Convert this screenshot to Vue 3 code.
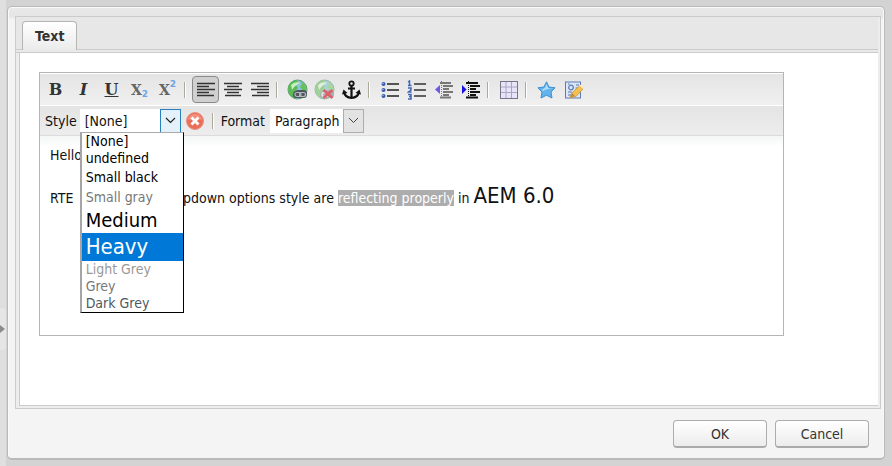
<script setup>
import { ref } from 'vue'

const style = ref('[None]')
const format = ref('Paragraph')
const active = ref('Heavy')

const styles = [
  { label: '[None]', kind: 'none' },
  { label: 'undefined', kind: 'plain' },
  { label: 'Small black', kind: 'small-black' },
  { label: 'Small gray', kind: 'small-gray' },
  { label: 'Medium', kind: 'medium' },
  { label: 'Heavy', kind: 'heavy' },
  { label: 'Light Grey', kind: 'light-grey' },
  { label: 'Grey', kind: 'grey' },
  { label: 'Dark Grey', kind: 'dark-grey' }
]
</script>

<template>
  <div class="page">
    <aside class="rail">
      <button class="handle" type="button" aria-label="Expand sidebar">
        <svg width="5" height="8" viewBox="0 0 5 8"><path d="M0 0L5 4L0 8Z" fill="#8c8c8c" /></svg>
      </button>
    </aside>

    <section class="dialog" role="dialog" aria-label="Text">
      <div class="panel">
        <div class="tabs" role="tablist">
          <button class="tab" type="button" role="tab" aria-selected="true">Text</button>
        </div>
        <div class="sheet">
          <div class="editor">
            <div class="bar" role="toolbar" aria-label="Formatting">
              <div class="group roomy">
                <button class="tool serif bold" type="button">B</button>
                <button class="tool serif italic" type="button">I</button>
                <button class="tool serif under" type="button">U</button>
                <button class="tool script" type="button" aria-label="Subscript">X<span class="sub">2</span></button>
                <button class="tool script" type="button" aria-label="Superscript">X<span class="sup">2</span></button>
              </div>
              <i class="rule"></i>
              <div class="group">
                <button class="tool pressed" type="button" aria-label="Align left">
                  <svg width="18" height="16" viewBox="0 0 18 16" stroke="#333" stroke-width="1.6"><path d="M0 1.5H18M0 4.5H12M0 7.5H18M0 10.5H12M0 13.5H17" /></svg>
                </button>
                <button class="tool" type="button" aria-label="Align center">
                  <svg width="18" height="16" viewBox="0 0 18 16" stroke="#333" stroke-width="1.6"><path d="M0 1.5H18M3 4.5H15M0 7.5H18M3 10.5H15M1 13.5H17" /></svg>
                </button>
                <button class="tool" type="button" aria-label="Align right">
                  <svg width="18" height="16" viewBox="0 0 18 16" stroke="#333" stroke-width="1.6"><path d="M0 1.5H18M6 4.5H18M0 7.5H18M6 10.5H18M1 13.5H18" /></svg>
                </button>
              </div>
              <i class="rule"></i>
              <div class="group">
                <button class="tool" type="button" aria-label="Link">
                  <svg width="21" height="21" viewBox="0 0 21 21">
                    <circle cx="10.500" cy="10.500" r="9.500" fill="#8cc4dd" stroke="#5a9f70" />
                    <path d="M3 4Q8 0 11 2L9 6L11 9L8 12L10 16L6 19Q1 15 1 9Z" fill="#5cba55" />
                    <path d="M13 2Q19 5 19.500 10L17 13L13 8L15 5Z" fill="#66c255" />
                    <path d="M4 6Q8 2 13 4Q8 6 5 11Z" fill="#d4f4cc" opacity=".9" />
                    <path d="M8 12Q9 11 12 11H17Q20 11 20 15Q20 19 17 19H9Q6 19 6 16Q6 13 8 12Z" fill="#4e555c" />
                    <rect x="8" y="13.500" width="6" height="4" rx="2" fill="none" stroke="#b5bcc0" stroke-width="1.200" />
                    <rect x="12.500" y="13.500" width="6" height="4" rx="2" fill="none" stroke="#b5bcc0" stroke-width="1.200" />
                  </svg>
                </button>
                <button class="tool" type="button" aria-label="Unlink">
                  <svg width="21" height="21" viewBox="0 0 21 21">
                    <g opacity=".6">
                      <circle cx="10.500" cy="10.500" r="9.500" fill="#86c0d6" stroke="#5f9f70" />
                      <path d="M3 4Q8 0 11 2L9 6L11 9L8 12L10 16L6 19Q1 15 1 9Z" fill="#6dc062" />
                      <path d="M13 2Q19 5 19.500 10L17 13L13 8L15 5Z" fill="#80ca70" />
                      <path d="M4 6Q8 2 13 4Q8 6 5 11Z" fill="#d8f4d2" />
                      <path d="M8 12Q9 11 12 11H17Q20 11 20 15Q20 19 17 19H9Q6 19 6 16Q6 13 8 12Z" fill="#80868c" />
                      <rect x="8" y="13.500" width="6" height="4" rx="2" fill="none" stroke="#eee" stroke-width="1.300" />
                    </g>
                    <path d="M9.500 11L18.500 19M18.500 11L9.500 19" stroke="#dc6068" stroke-width="2.600" />
                  </svg>
                </button>
                <button class="tool" type="button" aria-label="Anchor">
                  <svg width="19" height="20" viewBox="0 0 19 20" fill="none" stroke="#111" stroke-width="2.200">
                    <circle cx="9.500" cy="3.500" r="2.200" stroke-width="1.800" />
                    <path d="M9.500 6V18M6 8.500H13" />
                    <path d="M2 12Q3 17.500 9.500 18Q16 17.500 17 12" />
                    <path d="M0 14.500L1.500 9.500L5.500 13ZM19 14.500L17.500 9.500L13.500 13Z" fill="#111" stroke="none" />
                  </svg>
                </button>
              </div>
              <i class="rule"></i>
              <div class="group">
                <button class="tool" type="button" aria-label="Bulleted list">
                  <svg width="18" height="18" viewBox="0 0 18 18">
                    <path d="M6 3H18M6 9H18M6 15H18" stroke="#222" stroke-width="1.500" />
                    <g fill="#3558a8"><circle cx="2.500" cy="3" r="2" /><circle cx="2.500" cy="9" r="2" /><circle cx="2.500" cy="15" r="2" /></g>
                    <g fill="#9db6e8"><circle cx="2" cy="2.500" r=".8" /><circle cx="2" cy="8.500" r=".8" /><circle cx="2" cy="14.500" r=".8" /></g>
                  </svg>
                </button>
                <button class="tool" type="button" aria-label="Numbered list">
                  <svg width="19" height="20" viewBox="0 0 19 20" fill="none">
                    <path d="M7 4H19M7 10H19M7 16H19" stroke="#333" stroke-width="1.500" />
                    <path d="M1 2L2.500 1V5.500M1 5.500H4.500M1 8H4V10L1.500 12H4.500M1 14.500H4V16.500H2M4 16.500V19H1" stroke="#4167b4" stroke-width="1.500" />
                  </svg>
                </button>
                <button class="tool" type="button" aria-label="Outdent">
                  <svg width="18" height="18" viewBox="0 0 18 18">
                    <path d="M5 2H16M8 5H18M8 8H14M8 11H18M8 14H14M5 16.500H16" stroke="#777" stroke-width="1.800" />
                    <path d="M6.500 0V18" stroke="#777" stroke-dasharray="1 1" />
                    <path d="M0 8.500L5 4V13Z" fill="#6c5ce0" />
                  </svg>
                </button>
                <button class="tool" type="button" aria-label="Indent">
                  <svg width="18" height="18" viewBox="0 0 18 18">
                    <path d="M4 2H16M8 5H18M8 8H14M8 11H18M8 14H14M4 16.500H16" stroke="#111" stroke-width="1.900" />
                    <path d="M6.500 0V18" stroke="#111" stroke-dasharray="1 1" />
                    <path d="M0 4L4.500 8.500L0 13Z" fill="#1a0fe0" />
                  </svg>
                </button>
              </div>
              <i class="rule"></i>
              <div class="group">
                <button class="tool" type="button" aria-label="Table">
                  <svg width="18" height="18" viewBox="0 0 18 18">
                    <rect x=".5" y=".5" width="17" height="17" fill="#e7e4fa" stroke="#77758a" />
                    <path d="M6 1V17M11.500 1V17M1 6H17M1 11.500H17" stroke="#aaa5c4" />
                  </svg>
                </button>
              </div>
              <i class="rule"></i>
              <div class="group">
                <button class="tool" type="button" aria-label="Special characters">
                  <svg width="19" height="18" viewBox="0 0 19 18">
                    <path d="M9.500 .8L12 6L18 6.800L14 11L15 17L9.500 14.200L4 17L5 11L1 6.800L7 6Z" fill="#62b4ee" stroke="#3b8fd0" stroke-linejoin="round" />
                    <path d="M9.500 3L11 7L15 7.800Q9 7 5 10.500L6 8L8 7Z" fill="#b5e0fb" />
                  </svg>
                </button>
                <button class="tool" type="button" aria-label="Edit source">
                  <svg width="18" height="18" viewBox="0 0 18 18">
                    <rect x=".5" y="1" width="15" height="16" fill="#dde6f6" stroke="#5b7cb5" />
                    <circle cx="6" cy="6.500" r="2.300" fill="none" stroke="#5f80bb" stroke-width="1.300" />
                    <path d="M3 3H4.500M11 4H14M10.500 7H13M3 11H7M3 14H6" stroke="#7f9bcb" stroke-width="1.300" />
                    <path d="M5 16.500L7 12L14 5L18 8L11 15.500Z" fill="#f3c24e" stroke="#c78a2c" stroke-width=".7" />
                    <path d="M14 5L16 3.500L18 6V8Z" fill="#fbe9b0" />
                    <path d="M5 16.500L7 12L10 15Z" fill="#c08a45" />
                  </svg>
                </button>
              </div>
            </div>

            <div class="bar options">
              <label for="style">Style</label>
              <span class="combo open">
                <select id="style" v-model="style" class="field">
                  <option v-for="s in styles" :key="s.label">{{ s.label }}</option>
                </select>
                <span class="arrow"><svg width="11" height="7" viewBox="0 0 11 7" fill="none" stroke="#222" stroke-width="1.200"><path d="M1 1L5.500 5.500L10 1" /></svg></span>
                <ul class="list" role="listbox" aria-label="Style">
                  <li
                    v-for="s in styles"
                    :key="s.label"
                    role="option"
                    :aria-selected="s.label === active"
                    :class="['item', s.kind, { active: s.label === active }]"
                    @mouseenter="active = s.label"
                  >{{ s.label }}</li>
                </ul>
              </span>
              <button class="clear" type="button" aria-label="Remove style">
                <svg width="18" height="18" viewBox="0 0 18 18">
                  <circle cx="9" cy="9" r="8.500" fill="#ec6d57" stroke="#e39484" />
                  <path d="M2 8Q3 2 9 2Q15 2 16 8Q9 5 2 8Z" fill="#f5a08f" opacity=".7" />
                  <path d="M5.500 5.500L12.500 12.500M12.500 5.500L5.500 12.500" stroke="#fff" stroke-width="2.800" />
                </svg>
              </button>
              <i class="rule tall"></i>
              <label for="format">Format</label>
              <span class="combo">
                <select id="format" v-model="format" class="field">
                  <option>Paragraph</option>
                </select>
                <span class="arrow"><svg width="11" height="7" viewBox="0 0 11 7" fill="none" stroke="#444"><path d="M1 1L5.500 5.500L10 1" /></svg></span>
              </span>
            </div>

            <div class="content">
              <p>Hello</p>
              <p>RTE <span class="spaced">dropdown</span> options style are <mark>reflecting properly</mark> in <span class="large">AEM 6.0</span></p>
            </div>
          </div>
        </div>
      </div>

      <footer class="actions">
        <button class="push" type="button">OK</button>
        <button class="push" type="button">Cancel</button>
      </footer>
    </section>
  </div>
</template>

<style>
body {
  background: #d3d3d3;
}
</style>

<style scoped>
* {
  box-sizing: border-box;
}
.page {
  display: flex;
  min-height: 100vh;
  font: 14px/18px "DejaVu Sans Condensed", "DejaVu Sans", sans-serif;
  color: #111;
}
button,
select {
  font: inherit;
  color: inherit;
  margin: 0;
  padding: 0;
  border: 0;
  background: none;
}
.rail {
  flex: 0 0 6px;
  display: flex;
  align-items: center;
  padding-top: 192px;
  background: #dfdfdf;
}
.handle {
  width: 6px;
  height: 42px;
  display: flex;
  align-items: center;
  background: #e6e6e6;
  border-radius: 0 4px 4px 0;
}
.dialog {
  flex: 1;
  min-width: 0;
  display: flex;
  flex-direction: column;
  margin: 6px 7px 6px 1px;
  padding: 9px 3px 0 7px;
  border: 1px solid #b9b9b9;
  border-bottom-width: 2px;
  border-radius: 5px;
  background: linear-gradient(#e9e9e9, #e5e5e5 10px, #f4f4f4 12px);
  box-shadow: inset 0 1px #fafafa, inset 1px 0 #fafafa, inset -1px 0 #fafafa;
}
.panel {
  flex: 1;
  display: flex;
  flex-direction: column;
  border: 1px solid #cbcbcb;
  background: #ededed;
  padding: 0 2px 2px 3px;
}
.tabs {
  height: 36px;
  display: flex;
  align-items: flex-end;
  margin: 0 0 0 -3px;
  padding: 0 6px 2px;
  background: linear-gradient(#cbcbcb, #cbcbcb) 0 32px / 100% 1px no-repeat, linear-gradient(#e7e7e7, #e7e7e7) 0 0 / 100% 32px no-repeat, #e9e9e9;
  border-bottom: 1px solid #cbcbcb;
}
.tab {
  height: 29px;
  padding: 0 12px;
  border: 1px solid #b5b5b5;
  border-bottom: 0;
  border-radius: 4px 4px 0 0;
  background: linear-gradient(#fff, #ebebeb);
  font-weight: bold;
  color: #333;
}
.sheet {
  flex: 1;
  padding: 19px 94px 20px 19px;
  background: #fff;
  border: solid #cbcbcb;
  border-width: 0 0 1px 1px;
}
.editor {
  min-height: 264px;
  border: 1px solid #b5b5b5;
}
.bar {
  height: 32px;
  display: flex;
  align-items: center;
  padding-left: 2px;
  background: linear-gradient(#e4e4e4, #f0f0f0);
  border-top: 1px solid #fff;
}
.options {
  height: 31px;
  padding-left: 5px;
  border-bottom: 1px solid #dcdcdc;
  background: linear-gradient(#e4e4e4, #ededed);
}
.group {
  display: flex;
}
.roomy {
  gap: 1px;
}
.tool {
  width: 27px;
  height: 27px;
  display: flex;
  align-items: center;
  justify-content: center;
  color: #333;
}
.pressed {
  border: 1px solid #8a8a8a;
  border-radius: 4px;
  background: #d0d0d0;
}
.serif {
  font: bold 16px/18px "DejaVu Serif", serif;
}
.italic {
  font-style: italic;
}
.under {
  text-decoration: underline;
}
.script {
  font: bold 14px/18px "DejaVu Serif", serif;
  color: #666;
}
.sub,
.sup {
  font: bold 9px/9px "DejaVu Sans", sans-serif;
  color: #6ea4e4;
}
.sub {
  padding-top: 10px;
}
.sup {
  padding-bottom: 10px;
}
.rule {
  width: 2px;
  height: 16px;
  margin: 0 6px 0 3px;
  border-left: 1px solid #aaa99a;
  border-right: 1px solid #fff;
}
.tall {
  margin: 0 7px 0 8px;
}
.combo {
  position: relative;
  display: flex;
  height: 24px;
  width: 94px;
  margin-left: 5px;
}
.combo.open {
  width: 101px;
  margin-left: 3px;
  margin-right: 5px;
}
.field {
  appearance: none;
  flex: 1;
  min-width: 0;
  padding: 0 21px 0 5px;
  background: #fff;
  border-radius: 0;
}
.arrow {
  position: absolute;
  top: 0;
  right: 0;
  bottom: 0;
  width: 21px;
  display: flex;
  align-items: center;
  justify-content: center;
  border: 1px solid #adadad;
  background: #e3e3e3;
  pointer-events: none;
}
.open .arrow {
  border-color: #2680bd;
  background: #e4f0fa;
}
.list {
  position: absolute;
  z-index: 2;
  top: 100%;
  left: 0;
  width: 104px;
  margin: -1px 0 0;
  padding: 0;
  list-style: none;
  border: 1px solid #000;
  border-top-color: #aaa;
  border-left: 2px solid #a5a5a5;
  background: #fff;
}
.item {
  padding-left: 4px;
  line-height: 17px;
  color: #000;
}
.small-black {
  line-height: 20px;
}
.small-gray {
  line-height: 20px;
  color: #777;
}
.medium {
  font-size: 20px;
  line-height: 26px;
}
.heavy {
  font-size: 22px;
  line-height: 28px;
}
.light-grey {
  color: #999;
}
.grey {
  color: #777;
}
.dark-grey {
  color: #505860;
}
.item.active {
  background: #0078d7;
  color: #fff;
}
.clear,
.clear svg {
  display: block;
}
.content {
  padding: 10px;
  background: linear-gradient(#f3f7f6, #fff 11px);
}
p {
  margin: 0 0 18px;
}
.spaced {
  margin-left: 85px;
}
mark {
  background: #adadad;
  color: #fff;
}
.large {
  font-size: 22px;
  line-height: 28px;
}
.actions {
  display: flex;
  justify-content: flex-end;
  gap: 8px;
  padding: 11px 12px 10px 0;
}
.push {
  width: 94px;
  height: 28px;
  border: 1px solid #adadad;
  border-bottom: 2px solid #aaa;
  border-radius: 4px;
  background: linear-gradient(#fff, #ececec);
  color: #333;
}
</style>
